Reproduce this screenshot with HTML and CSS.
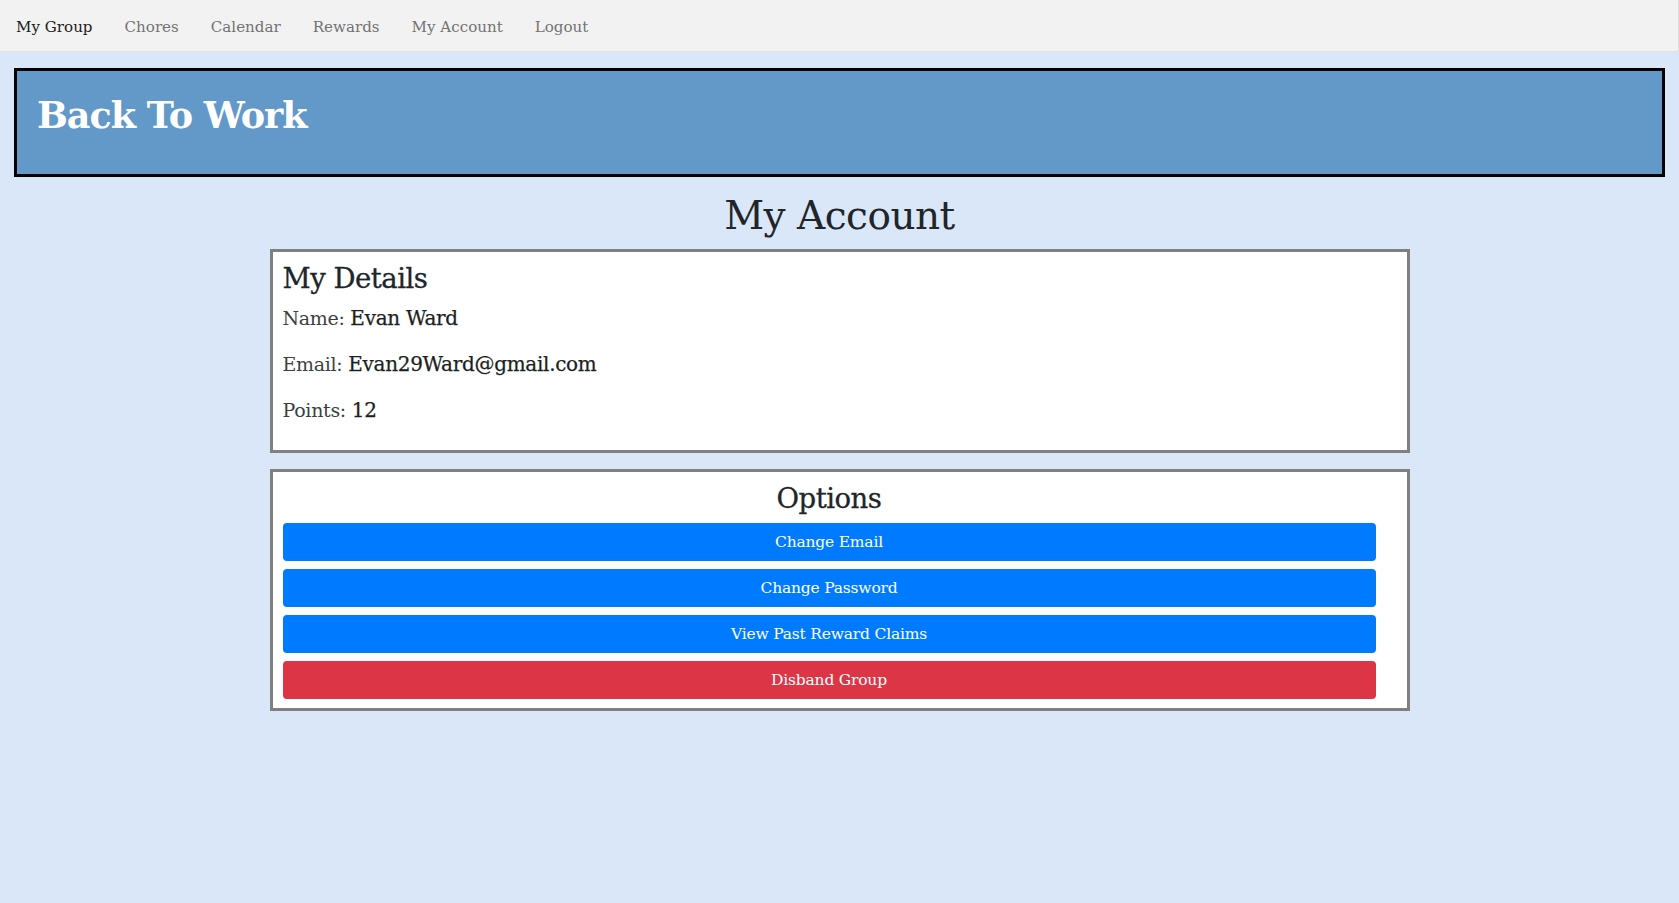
FILE: index.html
```html
<!DOCTYPE html>
<html lang="en">
<head>
<meta charset="utf-8">
<title>My Account - Back To Work</title>
<link rel="stylesheet" href="styles.css">
</head>
<body>
<nav class="topnav">
  <a class="nav-link active" href="#">My Group</a>
  <a class="nav-link" href="#">Chores</a>
  <a class="nav-link" href="#">Calendar</a>
  <a class="nav-link" href="#">Rewards</a>
  <a class="nav-link" href="#">My Account</a>
  <a class="nav-link" href="#">Logout</a>
</nav>
<header class="banner">
  <h1 class="brand">Back To Work</h1>
</header>
<main class="page">
  <h1 class="page-title">My Account</h1>
  <section class="card details">
    <h3 class="card-title">My Details</h3>
    <p class="lead">Name: <span class="value">Evan Ward</span></p>
    <p class="lead">Email: <span class="value">Evan29Ward@gmail.com</span></p>
    <p class="lead">Points: <span class="value">12</span></p>
  </section>
  <section class="card options">
    <h3 class="card-title center">Options</h3>
    <button class="btn btn-primary">Change Email</button>
    <button class="btn btn-primary">Change Password</button>
    <button class="btn btn-primary">View Past Reward Claims</button>
    <button class="btn btn-danger">Disband Group</button>
  </section>
</main>
</body>
</html>
```
FILE: styles.css
```css
* { box-sizing: border-box; }

body {
  margin: 0;
  background: #d9e7f9;
  font-family: "DejaVu Serif", "Liberation Serif", serif;
  color: #212529;
  font-size: 16px;
  line-height: 1.5;
}

.topnav {
  height: 52px;
  background: #f2f2f2;
  border-bottom: 1px solid #e2e2e2;
  border-right: 1px solid #dcdcdc;
  display: flex;
  align-items: center;
  gap: 32px;
  padding: 3px 0 0 16px;
}

.nav-link {
  font-size: 15.1px;
  color: #737373;
  text-decoration: none;
}

.nav-link.active {
  color: #1c1c1c;
}

.banner {
  margin: 16px 14px 0;
  background: #6399c9;
  border: 3px solid #000;
  height: 109px;
  padding: 19px 20px;
}

.brand {
  margin: 0;
  color: #fff;
  font-size: 36.5px;
  font-weight: 700;
  line-height: 52px;
  letter-spacing: -1px;
}

.page {
  width: 1140px;
  margin: 0 auto;
  padding-top: 13px;
}

.page-title {
  margin: 0 0 7px;
  text-align: center;
  font-size: 39px;
  font-weight: 400;
  line-height: 52px;
  letter-spacing: -0.5px;
}

.card {
  background: #fff;
  border: 3px solid #808080;
  margin-bottom: 16px;
}

.details {
  padding: 9px 10px 9px 10px;
}

.options {
  padding: 9px 31px 9px 10px;
  display: flex;
  flex-direction: column;
  gap: 8px;
}

.card-title {
  margin: 0 0 8px;
  font-size: 27.5px;
  font-weight: 400;
  line-height: 34px;
  letter-spacing: -0.5px;
  -webkit-text-stroke: 0.3px #212529;
}

.options .card-title {
  margin-bottom: 0;
}

.center { text-align: center; }

.lead {
  margin: 0 0 16px;
  font-size: 19px;
  line-height: 30px;
  color: #3b3f44;
  letter-spacing: -0.3px;
}

.value {
  color: #1c1f22;
  font-size: 20px;
  -webkit-text-stroke: 0.25px #1c1f22;
}

.btn {
  display: block;
  width: 100%;
  height: 38px;
  border: 0;
  border-radius: 4px;
  color: #fff;
  font-family: "DejaVu Serif", "Liberation Serif", serif;
  font-size: 15.5px;
  letter-spacing: -0.2px;
  cursor: pointer;
}

.btn-primary { background: #007bff; }
.btn-danger { background: #dc3545; }
```
